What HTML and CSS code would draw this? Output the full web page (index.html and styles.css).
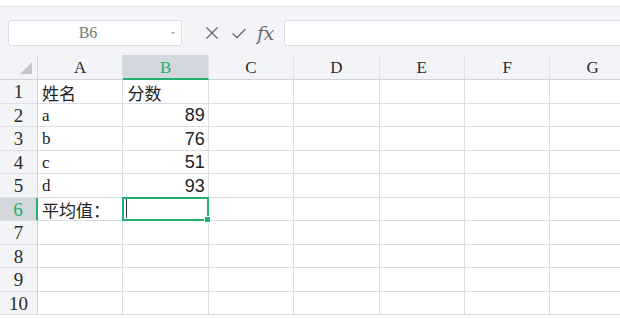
FILE: index.html
```html
<!DOCTYPE html>
<html lang="zh-CN">
<head>
  <meta charset="UTF-8">
  <meta name="viewport" content="width=device-width, initial-scale=1.0">
  <title>Sheet</title>
  <link rel="stylesheet" href="styles.css">
</head>
<body>
  <div class="top-strip"></div>
  <div class="band"></div>

  <div class="formula-row">
    <div class="name-box">
      <span class="name-text">B6</span>
      <span class="caret"></span>
    </div>
    <div class="formula-icons">
      <svg class="icon" viewBox="0 0 16 16">
        <path d="M2.5 2.5l11 11M13.5 2.5l-11 11" />
      </svg>
      <svg class="icon" viewBox="0 0 16 16">
        <path d="M1.5 8.5l4.5 4 8.5-8.5" />
      </svg>
      <span class="fx">fx</span>
    </div>
    <div class="formula-input"></div>
  </div>
  <div class="header-gap"></div>

  <div class="sheet">
    <div class="corner"><span class="triangle"></span></div>
    <div class="col-head">A</div>
    <div class="col-head active">B</div>
    <div class="col-head">C</div>
    <div class="col-head">D</div>
    <div class="col-head">E</div>
    <div class="col-head">F</div>
    <div class="col-head">G</div>

    <div class="row-head">1</div>
    <div class="cell">姓名</div>
    <div class="cell">分数</div>
    <div class="cell"></div><div class="cell"></div><div class="cell"></div><div class="cell"></div><div class="cell"></div>

    <div class="row-head">2</div>
    <div class="cell">a</div>
    <div class="cell num">89</div>
    <div class="cell"></div><div class="cell"></div><div class="cell"></div><div class="cell"></div><div class="cell"></div>

    <div class="row-head">3</div>
    <div class="cell">b</div>
    <div class="cell num">76</div>
    <div class="cell"></div><div class="cell"></div><div class="cell"></div><div class="cell"></div><div class="cell"></div>

    <div class="row-head">4</div>
    <div class="cell">c</div>
    <div class="cell num">51</div>
    <div class="cell"></div><div class="cell"></div><div class="cell"></div><div class="cell"></div><div class="cell"></div>

    <div class="row-head">5</div>
    <div class="cell">d</div>
    <div class="cell num">93</div>
    <div class="cell"></div><div class="cell"></div><div class="cell"></div><div class="cell"></div><div class="cell"></div>

    <div class="row-head active">6</div>
    <div class="cell">平均值：</div>
    <div class="cell selected"><span class="text-cursor"></span></div>
    <div class="cell"></div><div class="cell"></div><div class="cell"></div><div class="cell"></div><div class="cell"></div>

    <div class="row-head">7</div>
    <div class="cell"></div><div class="cell"></div><div class="cell"></div><div class="cell"></div><div class="cell"></div><div class="cell"></div><div class="cell"></div>

    <div class="row-head">8</div>
    <div class="cell"></div><div class="cell"></div><div class="cell"></div><div class="cell"></div><div class="cell"></div><div class="cell"></div><div class="cell"></div>

    <div class="row-head">9</div>
    <div class="cell"></div><div class="cell"></div><div class="cell"></div><div class="cell"></div><div class="cell"></div><div class="cell"></div><div class="cell"></div>

    <div class="row-head">10</div>
    <div class="cell"></div><div class="cell"></div><div class="cell"></div><div class="cell"></div><div class="cell"></div><div class="cell"></div><div class="cell"></div>
  </div>
</body>
</html>
```

FILE: styles.css
```css
:root {
  --toolbar-bg: #f3f4f7;
  --grid-line: #dadde6;
  --head-line: #cfd2db;
  --head-active: #d5d7de;
  --green: #21b06e;
  --text: #222222;
  --icon: #5f6368;
}

* {
  margin: 0;
  padding: 0;
  box-sizing: border-box;
}

body {
  width: 620px;
  height: 319px;
  overflow: hidden;
  background: #ffffff;
  font-family: "Liberation Serif", "Noto Sans CJK SC", serif;
  color: var(--text);
}

/* toolbar bits */
.top-strip {
  height: 7px;
  background: #ffffff;
  border-bottom: 1px solid #e3e4e8;
}

.band {
  height: 13px;
  background: var(--toolbar-bg);
}

.formula-row {
  display: flex;
  align-items: stretch;
  height: 26px;
  background: var(--toolbar-bg);
}

.name-box {
  width: 174px;
  margin-left: 8px;
  position: relative;
  display: flex;
  align-items: center;
  justify-content: center;
  background: #ffffff;
  border: 1px solid #dcdee3;
  border-radius: 3px;
}

.name-text {
  font-size: 16px;
  color: #7a7a7a;
  margin-left: -14px;
}

.caret {
  position: absolute;
  right: 6px;
  top: 11px;
  border-left: 2px solid transparent;
  border-right: 2px solid transparent;
  border-top: 2px solid #999999;
}

.formula-icons {
  width: 102px;
  display: flex;
  align-items: center;
  gap: 11px;
  padding-left: 22px;
}

.icon {
  width: 16px;
  height: 16px;
  fill: none;
  stroke: #666a70;
  stroke-width: 1.3;
}

.fx {
  font-family: "DejaVu Serif", serif;
  font-style: italic;
  font-size: 19px;
  color: #666a70;
  letter-spacing: -0.5px;
  line-height: 1;
  margin-left: -1px;
}

.formula-input {
  flex: 1;
  background: #ffffff;
  border: 1px solid #dcdee3;
  border-right: none;
  border-radius: 3px 0 0 3px;
}

.header-gap {
  height: 9px;
  background: var(--toolbar-bg);
}

/* sheet grid */
.sheet {
  display: grid;
  grid-template-columns: 38px repeat(7, 85.4px);
  grid-template-rows: 25px repeat(10, 23.5px);
}

.corner {
  background: var(--toolbar-bg);
  border-right: 1px solid var(--head-line);
  border-bottom: 1px solid var(--head-line);
  position: relative;
}

.triangle {
  position: absolute;
  left: 20px;
  top: 7px;
  width: 0;
  height: 0;
  border-left: 12px solid transparent;
  border-bottom: 12px solid #c4c6cb;
}

.col-head {
  background: var(--toolbar-bg);
  border-bottom: 1px solid var(--head-line);
  border-right: 1px solid #dde0e7;
  display: flex;
  align-items: center;
  justify-content: center;
  font-size: 17px;
  color: #2b2b2b;
  padding-top: 1px;
}

.col-head.active {
  background: var(--head-active);
  border-bottom: 2px solid var(--green);
  color: var(--green);
  padding-top: 2px;
}

.row-head {
  background: var(--toolbar-bg);
  border-right: 1px solid var(--head-line);
  border-bottom: 1px solid #dde0e7;
  display: flex;
  align-items: center;
  justify-content: center;
  font-size: 19px;
  color: #2b2b2b;
  padding-top: 2px;
}

.row-head.active {
  background: var(--head-active);
  border-right: 2px solid var(--green);
  color: var(--green);
}

.cell {
  border-right: 1px solid var(--grid-line);
  border-bottom: 1px solid var(--grid-line);
  display: flex;
  align-items: center;
  padding: 2px 4px 0;
  font-size: 17px;
  white-space: nowrap;
}

.cell.num {
  justify-content: flex-end;
  font-family: "Liberation Sans", sans-serif;
  font-size: 18px;
  padding-right: 3px;
}

.cell.selected {
  position: relative;
  padding-top: 0;
}

.cell.selected::after {
  content: "";
  position: absolute;
  left: -1px;
  top: -1px;
  right: -1px;
  bottom: -1px;
  border: 2px solid var(--green);
}

.cell.selected::before {
  content: "";
  position: absolute;
  right: -3px;
  bottom: -3px;
  width: 5px;
  height: 5px;
  background: var(--green);
  border: 1px solid #ffffff;
  z-index: 1;
}

.text-cursor {
  width: 1px;
  height: 19px;
  background: #333333;
  margin-left: -1px;
}
```
